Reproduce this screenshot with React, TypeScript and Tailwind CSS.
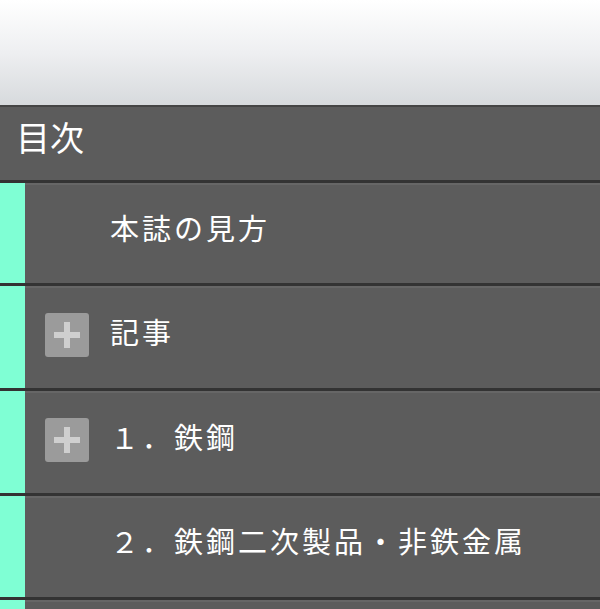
const rows = [
  { label: '本誌の見方', expandable: false, h: 'h-[103px]' },
  { label: '記事', expandable: true, h: 'h-[105px]' },
  { label: '１．鉄鋼', expandable: true, h: 'h-[105px]' },
  { label: '２．鉄鋼二次製品・非鉄金属', expandable: false, h: 'h-[104px]' },
  { label: '', expandable: false, h: 'h-[105px]' },
];

function PlusBox() {
  return (
    <div className="relative h-[44px] w-[44px] shrink-0 rounded-[3px] bg-[#9b9b9b]">
      <div className="absolute left-[9px] top-[19px] h-[6px] w-[26px] bg-[#cfcfcf]" />
      <div className="absolute left-[19px] top-[9px] h-[26px] w-[6px] bg-[#cfcfcf]" />
    </div>
  );
}

export default function App() {
  return (
    <div className="h-[609px] w-[600px] overflow-hidden bg-[#5c5c5c] font-['Noto_Sans_CJK_JP','Noto_Sans',sans-serif] text-white">
      {/* 上部バー */}
      <div className="h-[105px] bg-gradient-to-b from-white via-[#eeeff1] to-[#d7dadd]" />

      <div className="flex h-[75px] items-center border-t-2 border-[#454545] bg-[#5c5c5c] pb-[14px] pl-4 text-[34px] leading-none">
        目次
      </div>

      {rows.map((row, i) => (
        <div key={i} className={`flex ${row.h} border-t-[3px] border-[#333333]`}>
          <div className="w-[25px] shrink-0 bg-[#7fffd4]" />
          <div className="flex flex-1 items-center border-t-2 border-[#666666] bg-[#5c5c5c] pb-[6px]">
            <div className="ml-[20px] w-[44px] shrink-0">{row.expandable && <PlusBox />}</div>
            <span className="mb-[8px] ml-[21px] whitespace-nowrap text-[29px] leading-none tracking-[3px]">
              {row.label}
            </span>
          </div>
        </div>
      ))}
    </div>
  );
}
